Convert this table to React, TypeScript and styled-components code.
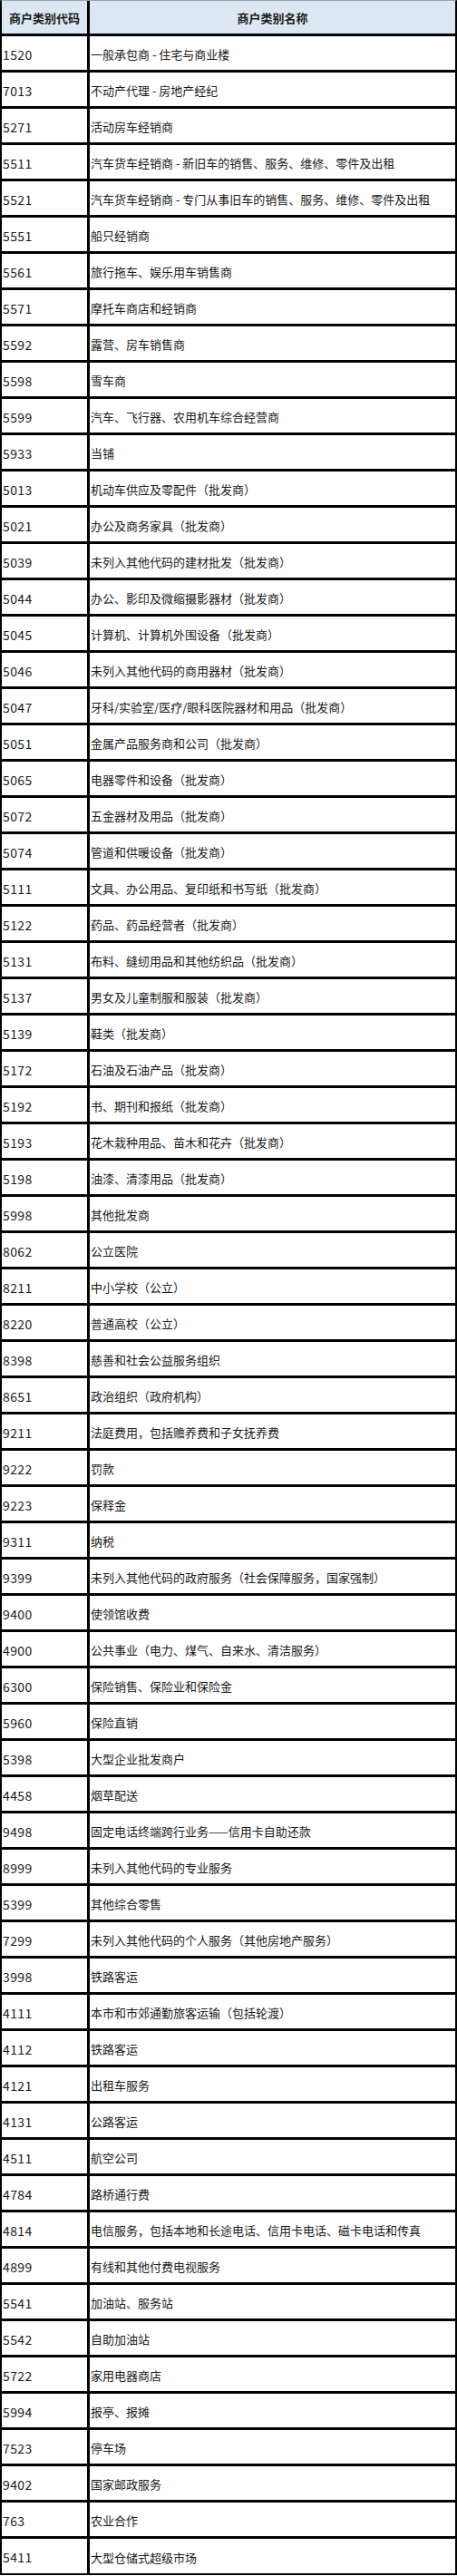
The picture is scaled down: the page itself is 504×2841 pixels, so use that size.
import * as React from "react";
import styled, { createGlobalStyle } from "styled-components";

const rows: [string, string][] = [
  ["1520", "一般承包商 - 住宅与商业楼"],
  ["7013", "不动产代理 - 房地产经纪"],
  ["5271", "活动房车经销商"],
  ["5511", "汽车货车经销商 - 新旧车的销售、服务、维修、零件及出租"],
  ["5521", "汽车货车经销商 - 专门从事旧车的销售、服务、维修、零件及出租"],
  ["5551", "船只经销商"],
  ["5561", "旅行拖车、娱乐用车销售商"],
  ["5571", "摩托车商店和经销商"],
  ["5592", "露营、房车销售商"],
  ["5598", "雪车商"],
  ["5599", "汽车、飞行器、农用机车综合经营商"],
  ["5933", "当铺"],
  ["5013", "机动车供应及零配件（批发商）"],
  ["5021", "办公及商务家具（批发商）"],
  ["5039", "未列入其他代码的建材批发（批发商）"],
  ["5044", "办公、影印及微缩摄影器材（批发商）"],
  ["5045", "计算机、计算机外围设备（批发商）"],
  ["5046", "未列入其他代码的商用器材（批发商）"],
  ["5047", "牙科/实验室/医疗/眼科医院器材和用品（批发商）"],
  ["5051", "金属产品服务商和公司（批发商）"],
  ["5065", "电器零件和设备（批发商）"],
  ["5072", "五金器材及用品（批发商）"],
  ["5074", "管道和供暖设备（批发商）"],
  ["5111", "文具、办公用品、复印纸和书写纸（批发商）"],
  ["5122", "药品、药品经营者（批发商）"],
  ["5131", "布料、缝纫用品和其他纺织品（批发商）"],
  ["5137", "男女及儿童制服和服装（批发商）"],
  ["5139", "鞋类（批发商）"],
  ["5172", "石油及石油产品（批发商）"],
  ["5192", "书、期刊和报纸（批发商）"],
  ["5193", "花木栽种用品、苗木和花卉（批发商）"],
  ["5198", "油漆、清漆用品（批发商）"],
  ["5998", "其他批发商"],
  ["8062", "公立医院"],
  ["8211", "中小学校（公立）"],
  ["8220", "普通高校（公立）"],
  ["8398", "慈善和社会公益服务组织"],
  ["8651", "政治组织（政府机构）"],
  ["9211", "法庭费用，包括赡养费和子女抚养费"],
  ["9222", "罚款"],
  ["9223", "保释金"],
  ["9311", "纳税"],
  ["9399", "未列入其他代码的政府服务（社会保障服务，国家强制）"],
  ["9400", "使领馆收费"],
  ["4900", "公共事业（电力、煤气、自来水、清洁服务）"],
  ["6300", "保险销售、保险业和保险金"],
  ["5960", "保险直销"],
  ["5398", "大型企业批发商户"],
  ["4458", "烟草配送"],
  ["9498", "固定电话终端跨行业务——信用卡自助还款"],
  ["8999", "未列入其他代码的专业服务"],
  ["5399", "其他综合零售"],
  ["7299", "未列入其他代码的个人服务（其他房地产服务）"],
  ["3998", "铁路客运"],
  ["4111", "本市和市郊通勤旅客运输（包括轮渡）"],
  ["4112", "铁路客运"],
  ["4121", "出租车服务"],
  ["4131", "公路客运"],
  ["4511", "航空公司"],
  ["4784", "路桥通行费"],
  ["4814", "电信服务，包括本地和长途电话、信用卡电话、磁卡电话和传真"],
  ["4899", "有线和其他付费电视服务"],
  ["5541", "加油站、服务站"],
  ["5542", "自助加油站"],
  ["5722", "家用电器商店"],
  ["5994", "报亭、报摊"],
  ["7523", "停车场"],
  ["9402", "国家邮政服务"],
  ["763", "农业合作"],
  ["5411", "大型仓储式超级市场"],
];

const GlobalStyle = createGlobalStyle`
  html, body {
    margin: 0;
    padding: 0;
    background: #ffffff;
  }
  body {
    font-family: "Noto Sans CJK SC", "Noto Sans", sans-serif;
    color: #1a1a1a;
  }
`;

const Table = styled.div`
  width: 504px;
  box-sizing: border-box;
  border-left: 2px solid #000;
  border-right: 2px solid #000;
  border-top: 1px solid #9aa4ad;
`;

const Row = styled.div<{ $head?: boolean }>`
  display: grid;
  grid-template-columns: 97px 1fr;
  height: 40px;
  box-sizing: border-box;
  border-bottom: 3px solid #000;
  background: ${(p) => (p.$head ? "#dde7f1" : "#ffffff")};

  &:first-child {
    height: 39px;
  }
  &:last-child {
    border-bottom-width: 2px;
  }
`;

const Cell = styled.div<{ $head?: boolean; $code?: boolean }>`
  display: flex;
  align-items: center;
  justify-content: ${(p) => (p.$head ? "center" : "flex-start")};
  padding: ${(p) => (p.$head ? "0" : "2px 0 0 1px")};
  font-size: ${(p) => (p.$code ? "14px" : "13px")};
  font-weight: ${(p) => (p.$head ? 700 : 400)};
  letter-spacing: ${(p) => (p.$code ? "0.4px" : "0")};
  white-space: nowrap;
  overflow: hidden;
  border-right: ${(p) => (p.$code ? "3px solid #000" : "none")};
`;

export default function App() {
  return (
    <>
      <GlobalStyle />
      <Table>
        <Row $head>
          <Cell $head $code style={{ fontSize: "13px", letterSpacing: 0 }}>
            商户类别代码
          </Cell>
          <Cell $head>商户类别名称</Cell>
        </Row>
        {rows.map(([code, name], i) => (
          <Row key={i}>
            <Cell $code>{code}</Cell>
            <Cell>{name}</Cell>
          </Row>
        ))}
      </Table>
    </>
  );
}
